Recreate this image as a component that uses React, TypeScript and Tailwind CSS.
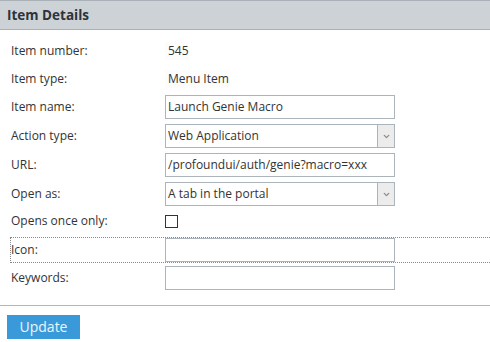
import { ChevronDown } from "lucide-react";

const inputCls =
  "w-[230px] h-[24px] border border-[#abb3bb] bg-white px-[2px] text-[12px] text-[#333] flex items-center";

function Row({
  label,
  className = "",
  children,
}: {
  label: string;
  className?: string;
  children?: React.ReactNode;
}) {
  return (
    <div className={`flex items-center h-[24px] ${className}`}>
      <div className="w-[154px] text-[12px] text-[#333] leading-none">{label}</div>
      {children}
    </div>
  );
}

function Select({ value }: { value: string }) {
  return (
    <div className={`${inputCls} !px-0`}>
      <span className="flex-1 pl-[2px]">{value}</span>
      <span className="w-[17px] h-full border-l border-[#abb3bb] bg-[#ececec] flex items-center justify-center">
        <ChevronDown className="w-[9px] h-[9px] text-[#8a8a8a]" strokeWidth={3.5} />
      </span>
    </div>
  );
}

export default function App() {
  return (
    <div
      className="w-[490px] h-[342px] bg-white overflow-hidden"
      style={{ fontFamily: '"Open Sans", "Noto Sans", sans-serif' }}
    >
      <div className="h-[30px] bg-[#cdd2d6] border-t border-b border-[#a9b0b7] flex items-center pl-[7px]">
        <h2 className="text-[13.5px] font-bold text-[#2c333b]">Item Details</h2>
      </div>

      <div className="pl-[11px] pt-[9px] flex flex-col">
        <Row label="Item number:">
          <span className="text-[12px] text-[#333] pl-[3px] bg-[#fcfcfc]">545</span>
        </Row>
        <Row label="Item type:" className="mt-[4px]">
          <span className="text-[12px] text-[#333] pl-[3px] bg-[#fcfcfc]">Menu Item</span>
        </Row>
        <Row label="Item name:" className="mt-[4px]">
          <div className={inputCls}>Launch Genie Macro</div>
        </Row>
        <Row label="Action type:" className="mt-[5px]">
          <Select value="Web Application" />
        </Row>
        <Row label="URL:" className="mt-[5px]">
          <div className={inputCls}>/profoundui/auth/genie?macro=xxx</div>
        </Row>
        <Row label="Open as:" className="mt-[5px]">
          <Select value="A tab in the portal" />
        </Row>
        <Row label="Opens once only:" className="mt-[3px]">
          <div className="w-[13px] h-[13px] border border-[#333] bg-white" />
        </Row>
        <Row
          label="Icon:"
          className="mt-[5px] w-[490px] outline-1 outline-dotted outline-[#888]"
        >
          <div className={inputCls} />
        </Row>
        <Row label="Keywords:" className="mt-[4px]">
          <div className={inputCls} />
        </Row>
      </div>

      <div className="mt-[15px] border-t border-[#b0b7be]" />
      <div className="pl-[7px] pt-[8px]">
        <button className="w-[73px] h-[24px] bg-[#3a9ad9] text-[#eef5fb] text-[14px]">
          Update
        </button>
      </div>
    </div>
  );
}
